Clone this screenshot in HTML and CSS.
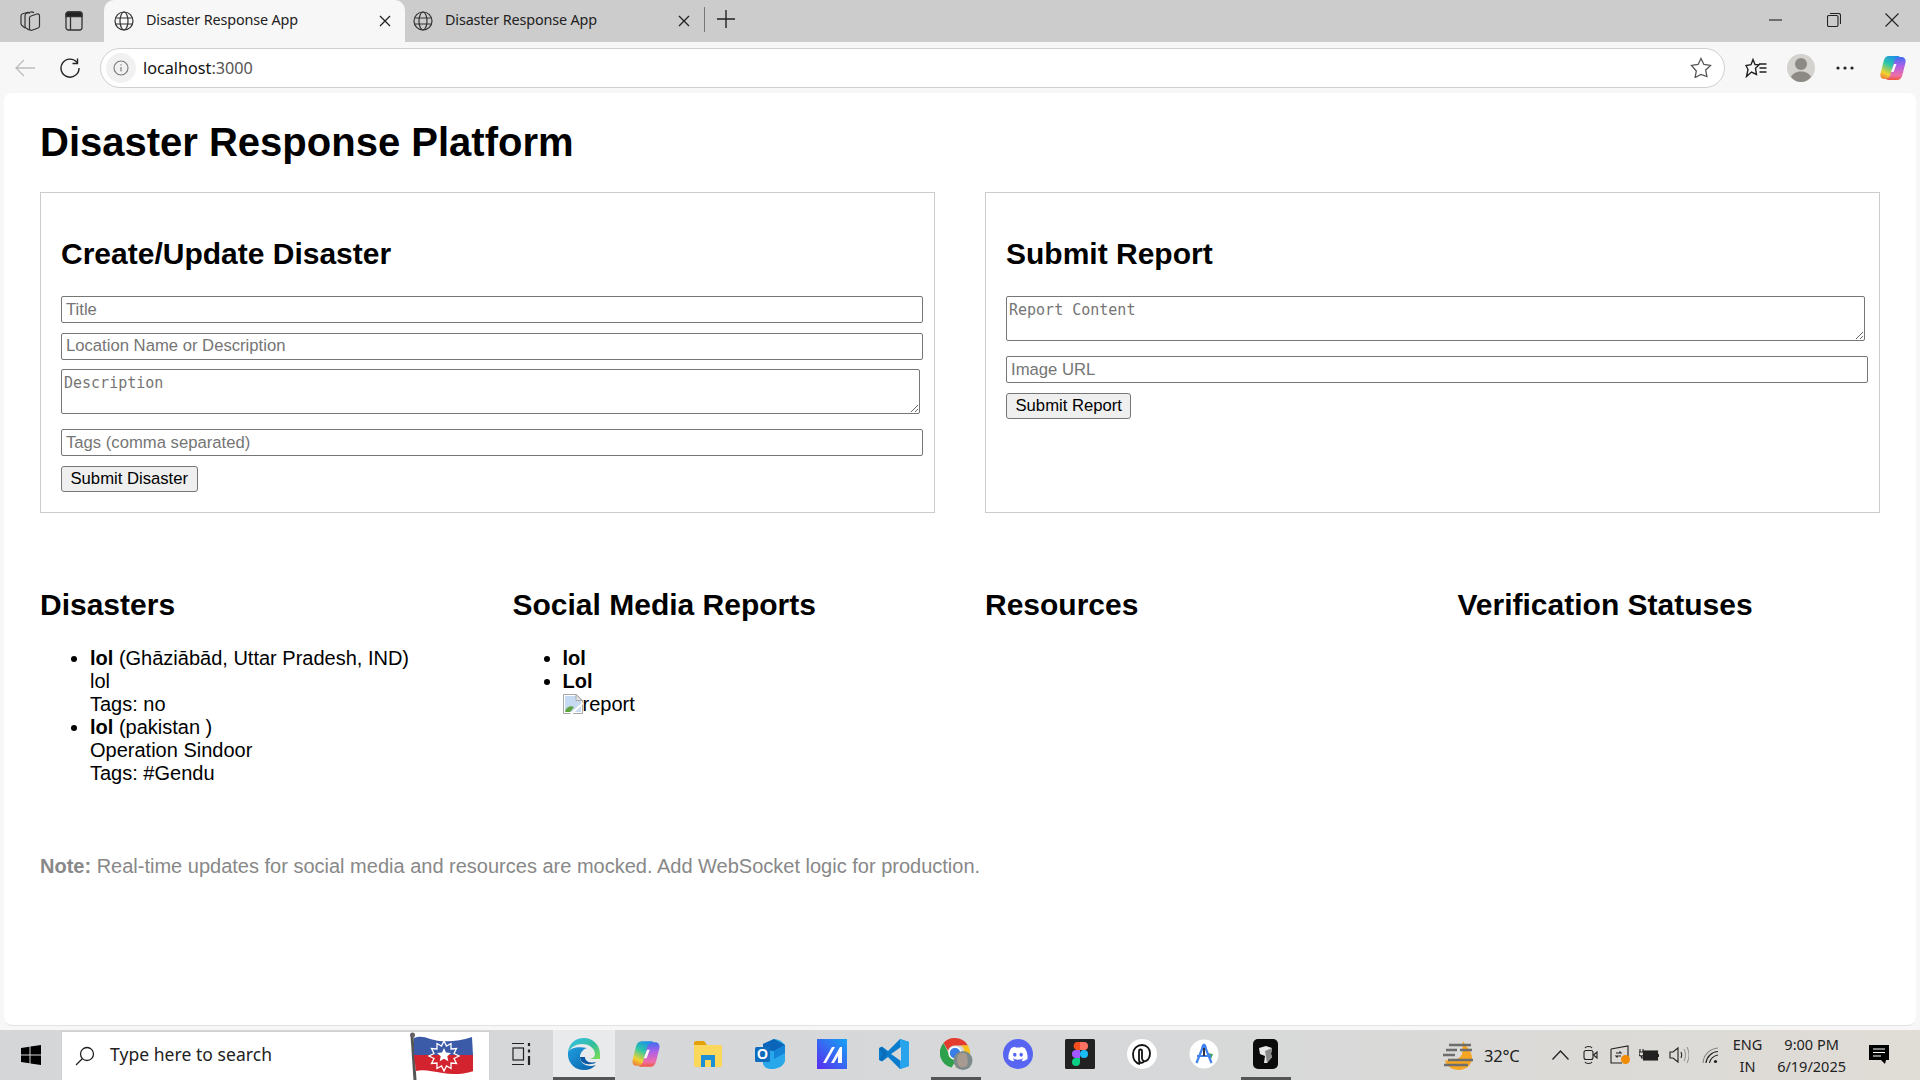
FILE: index.html
```html
<!DOCTYPE html>
<html lang="en">
<head>
    <meta charset="UTF-8">
    <meta name="viewport" content="width=device-width, initial-scale=1.0">
    <title>Disaster Response App</title>
    <link rel="stylesheet" href="styles.css">
</head>
<body>
    <svg class="defs" width="0" height="0">
        <defs>
            <linearGradient id="copilotA" x1="0.7" y1="0" x2="0.3" y2="1">
                <stop offset="0" stop-color="#1f8fe8"/><stop offset="0.4" stop-color="#2cc7a8"/><stop offset="0.8" stop-color="#f1d22e"/><stop offset="1" stop-color="#f08a3a"/>
            </linearGradient>
            <linearGradient id="copilotB" x1="0.5" y1="1" x2="0.5" y2="0">
                <stop offset="0" stop-color="#3f6ff0"/><stop offset="0.4" stop-color="#b05fe6"/><stop offset="0.8" stop-color="#ee6ea8"/><stop offset="1" stop-color="#f0563c"/>
            </linearGradient>
            <linearGradient id="edgeA" x1="0" y1="0" x2="1" y2="1">
                <stop offset="0" stop-color="#35c1f1"/><stop offset="0.55" stop-color="#33bd9c"/><stop offset="1" stop-color="#7ee04f"/>
            </linearGradient>
            <linearGradient id="edgeB" x1="0" y1="0" x2="1" y2="1">
                <stop offset="0" stop-color="#1f9fe0"/><stop offset="1" stop-color="#0a5fa8"/>
            </linearGradient>
            <linearGradient id="slashLogo" x1="1" y1="0" x2="0" y2="1">
                <stop offset="0" stop-color="#14a4f5"/><stop offset="1" stop-color="#5a2cf0"/>
            </linearGradient>
            <symbol id="copilot" viewBox="0 0 28 28">
                <path d="M10 2h9c.8 0 1.500.5 2 1.200-2.500.2-3.800 2-4.500 4.300L13 20c-.8 3-2.500 5-5.500 5h-2c-3 0-4.700-2.500-4-5.500l3-12C5.300 4 7 2 10 2z" fill="url(#copilotA)"/>
                <path d="M10 2h9c.8 0 1.500.5 2 1.200-2.500.2-3.800 2-4.500 4.300L13 20c-.8 3-2.500 5-5.500 5h-2c-3 0-4.700-2.500-4-5.500l3-12C5.300 4 7 2 10 2z" fill="url(#copilotB)" transform="rotate(180 14 14)"/>
                <path d="M15 10h2.500l-3 8H12z" fill="#fff"/>
            </symbol>
            <symbol id="globe" viewBox="0 0 20 20">
                <g fill="none" stroke="#333" stroke-width="1.200">
                    <circle cx="10" cy="10" r="9"/>
                    <ellipse cx="10" cy="10" rx="4" ry="9"/>
                    <path d="M1.500 7h17M1.500 13h17"/>
                </g>
            </symbol>
        </defs>
    </svg>

    <header class="tabStrip">
        <div class="stripIcons">
            <svg class="stripIcon" viewBox="0 0 22 22" width="22" height="22" fill="none" stroke="#333" stroke-width="1.200">
                <path d="M6 18 3 15.500c-.6-.5-1-1.200-1-2V6c0-1.200.7-2 1.700-2.300L8 2.500c1-.2 2 0 3 .8"/>
                <path d="M10.500 20.300 7 18c-.6-.5-1-1.200-1-2V5.500c0-1.200.8-2 1.800-2.300L12 2c1-.2 2 0 3 .8"/>
                <path d="M10.500 8c0-1 .6-1.700 1.500-2l6-2c1.300-.4 2.500.4 2.500 1.700V16c0 1-.6 1.700-1.500 2l-6 2.300c-1.300.4-2.500-.4-2.500-1.700z"/>
            </svg>
            <svg class="stripIcon" viewBox="0 0 18 20" width="18" height="20" fill="none" stroke="#333" stroke-width="1.300">
                <rect x="1" y="1" width="16" height="18" rx="2.500"/>
                <path d="M1 5.500V3.500C1 2 2 1 3.500 1h11C16 1 17 2 17 3.500v2z" fill="#222"/>
                <path d="M5.500 5.500V19"/>
            </svg>
        </div>
        <div class="tab tabActive">
            <svg class="tabGlobe" width="20" height="20"><use href="#globe"/></svg>
            <span class="tabTitle">Disaster Response App</span>
            <svg class="tabClose" viewBox="0 0 12 12" width="12" height="12" stroke="#222" stroke-width="1.300"><path d="M1 1l10 10M11 1 1 11"/></svg>
        </div>
        <div class="tab">
            <svg class="tabGlobe" width="20" height="20"><use href="#globe"/></svg>
            <span class="tabTitle">Disaster Response App</span>
            <svg class="tabClose" viewBox="0 0 12 12" width="12" height="12" stroke="#222" stroke-width="1.300"><path d="M1 1l10 10M11 1 1 11"/></svg>
        </div>
        <div class="tabSeparator"></div>
        <svg class="newTab" viewBox="0 0 18 18" width="18" height="18" stroke="#222" stroke-width="1.400"><path d="M9 0v18M0 9h18"/></svg>
        <div class="windowControls">
            <svg viewBox="0 0 14 14" width="14" height="14" stroke="#222" stroke-width="1.100"><path d="M0 7h13"/></svg>
            <svg viewBox="0 0 14 14" width="14" height="14" fill="none" stroke="#222" stroke-width="1.100"><rect x="0.500" y="2.500" width="10.500" height="11" rx="1.500"/><path d="M3 .5h8.500c1 0 2 1 2 2V11"/></svg>
            <svg viewBox="0 0 14 14" width="14" height="14" stroke="#222" stroke-width="1.100"><path d="M.5.5l13 13M13.500.5l-13 13"/></svg>
        </div>
    </header>

    <nav class="toolbar">
        <svg class="navBack" viewBox="0 0 20 18" width="20" height="18" fill="none" stroke="#bdbdbd" stroke-width="1.300"><path d="M20 9H1M9 1 1 9l8 8"/></svg>
        <svg class="navReload" viewBox="0 0 20 20" width="20" height="20" fill="none" stroke="#222" stroke-width="1.400"><path d="M17 4.500A9 9 0 1 0 19 10"/><path d="M17.500 .5v5h-5"/></svg>
        <div class="addressBar">
            <span class="siteInfo">
                <svg viewBox="0 0 16 16" width="16" height="16" fill="none" stroke="#777" stroke-width="1.100"><circle cx="8" cy="8" r="7"/><path d="M8 7v4.500M8 4.200v1.300"/></svg>
            </span>
            <span class="addressText">localhost<span class="addressPort">:3000</span></span>
            <svg class="addressStar" viewBox="0 0 22 21" width="22" height="21" fill="none" stroke="#555" stroke-width="1.300"><path d="M11 1.500l2.900 6 6.600.9-4.800 4.600 1.200 6.500L11 17.400l-5.900 3.100 1.200-6.500L1.500 8.400l6.600-.9z"/></svg>
        </div>
        <div class="toolbarRight">
            <svg viewBox="0 0 22 20" width="22" height="20" fill="none" stroke="#222" stroke-width="1.400"><path d="M8 1.500l2 5 4 .4-3.500 3.300 1 6.300L6.500 14l-5 4.500 1.500-7L1 7.500l5-.8z"/><path d="M14 6h7.500M14.500 10h7M14.500 14h7"/></svg>
            <svg class="avatar" viewBox="0 0 28 28" width="28" height="28"><circle cx="14" cy="14" r="14" fill="#d4d2ce"/><circle cx="14" cy="10" r="6" fill="#8d8985"/><path d="M4 23c2-4 6-5.500 10-5.500s8 1.500 10 5.500c-2.500 3-6 5-10 5s-7.500-2-10-5z" fill="#8d8985"/></svg>
            <svg class="moreDots" viewBox="0 0 18 4" width="18" height="4" fill="#222"><circle cx="2" cy="2" r="1.600"/><circle cx="9" cy="2" r="1.600"/><circle cx="16" cy="2" r="1.600"/></svg>
            <svg class="copilotButton" width="28" height="28"><use href="#copilot"/></svg>
        </div>
    </nav>

    <main class="page">
        <h1>Disaster Response Platform</h1>

        <section class="forms">
            <div class="panel">
                <h2>Create/Update Disaster</h2>
                <input class="field" type="text" placeholder="Title">
                <input class="field" type="text" placeholder="Location Name or Description">
                <textarea class="area" placeholder="Description"></textarea>
                <input class="field" type="text" placeholder="Tags (comma separated)">
                <button class="submit">Submit Disaster</button>
            </div>
            <div class="panel">
                <h2>Submit Report</h2>
                <textarea class="area" placeholder="Report Content"></textarea>
                <input class="field" type="text" placeholder="Image URL">
                <button class="submit">Submit Report</button>
            </div>
        </section>

        <section class="lists">
            <div>
                <h2>Disasters</h2>
                <ul>
                    <li><strong>lol</strong> (Ghāziābād, Uttar Pradesh, IND)<br>lol<br>Tags: no</li>
                    <li><strong>lol</strong> (pakistan )<br>Operation Sindoor<br>Tags: #Gendu</li>
                </ul>
            </div>
            <div>
                <h2>Social Media Reports</h2>
                <ul>
                    <li><strong>lol</strong></li>
                    <li><strong>Lol</strong><br>
                        <span class="brokenImage">
                            <svg viewBox="0 0 20 20" width="20" height="20">
                                <path d="M.5.5h13l6 6v13H.5z" fill="#fff" stroke="#a8a8a8"/>
                                <path d="M2 2h11l5 5v11H2z" fill="#c6daf2"/>
                                <path d="M2 18c1-5 5-7 9-5l-4 5z" fill="#5fa33c"/>
                                <path d="M13 .5v6h6z" fill="#e8e8e8" stroke="#a8a8a8"/>
                                <path d="M8 20 20 9" stroke="#fff" stroke-width="2"/>
                            </svg>report
                        </span>
                    </li>
                </ul>
            </div>
            <div>
                <h2>Resources</h2>
            </div>
            <div>
                <h2>Verification Statuses</h2>
            </div>
        </section>

        <p class="note"><strong>Note:</strong> Real-time updates for social media and resources are mocked. Add WebSocket logic for production.</p>
    </main>

    <footer class="taskbar">
        <div class="startButton">
            <svg viewBox="0 0 20 20" width="20" height="20" fill="#000"><path d="M0 3l8.500-1.300v7.700H0zM9.500 1.500 20 0v9.400H9.500zM0 10.500h8.500v7.800L0 17zM9.500 10.500H20V20L9.500 18.500z"/></svg>
        </div>
        <div class="searchBox">
            <svg viewBox="0 0 20 20" width="20" height="20" fill="none" stroke="#222" stroke-width="1.300"><circle cx="12" cy="8" r="6.500"/><path d="M7.500 12.500 1 19"/></svg>
            <span class="searchText">Type here to search</span>
            <svg class="searchFlag" viewBox="0 0 63 48" width="63" height="48">
                <path d="M2 3l3 45" stroke="#555" stroke-width="3"/>
                <circle cx="2.500" cy="3" r="2.500" fill="#665f66"/>
                <path d="M4 6c9-4 16 2 26 3s20 0 32-4l1 18H4z" fill="#3b5ba8"/>
                <path d="M4 23h59l.500 16c-10 3-20 4-31 2S13 37 6 39z" fill="#d3232f"/>
                <path d="M34 9l2.500 5 4.500-2.500 0 5.500 5.500-.5-2.500 5 5 2.500-5 2.500 2.500 5-5.500-.5 0 5.500-4.500-2.500-2.500 5-2.500-5-4.500 2.500 0-5.500-5.500.5 2.500-5-5-2.500 5-2.500-2.500-5 5.500.5 0-5.500 4.500 2.500z" fill="none" stroke="#fff" stroke-width="1.300"/>
                <path d="M34 16l2 4.500 5 .5-3.700 3.300 1 5-4.300-2.600-4.300 2.600 1-5L27 21l5-.5z" fill="#fff"/>
            </svg>
        </div>
        <div class="appSlot appTaskView">
            <svg viewBox="0 0 20 24" width="20" height="24" fill="none" stroke="#222" stroke-width="1.200"><path d="M0 1.500h12M0 22.500h12"/><rect x="1" y="6" width="10.500" height="12"/><path d="M17 1v3M17 7.500v3M17 14v9" stroke-width="2.200"/></svg>
        </div>
        <div class="appSlot appActive">
            <svg viewBox="0 0 32 32" width="32" height="32">
                <path d="M16 0C7 0 1 6 0 14c3-5 8-8 14-8 8 0 13 5 13 10 0 3-3 5-7 5h12c.500-2 0-4 0-5C32 7 25 0 16 0z" fill="url(#edgeA)"/>
                <path d="M0 14c-1 10 6 18 16 18 5 0 9-2 12-5-8 3-16-1-16-8 0-4 3-8 7-9-9-2-17 0-19 4z" fill="url(#edgeB)"/>
                <path d="M12 19c0 5 5 8 11 7 3 0 4-1 5-2-3 1-11 1-11-5z" fill="#0c59a4"/>
            </svg>
        </div>
        <div class="appSlot"><svg width="30" height="30"><use href="#copilot"/></svg></div>
        <div class="appSlot">
            <svg viewBox="0 0 28 28" width="28" height="28">
                <path d="M0 3c0-1 .8-2 2-2h8l3 4H0z" fill="#e3a008"/>
                <rect x="0" y="5" width="28" height="22" rx="1" fill="#fbd75b"/>
                <path d="M7 15h14v12h-4v-7h-6v7H7z" fill="#1d8fd6"/>
            </svg>
        </div>
        <div class="appSlot">
            <svg viewBox="0 0 30 30" width="30" height="30">
                <path d="M8 5 19 0c4 0 8 2 11 6v16c-2 6-8 8-13 8-5 0-8-2-9-5z" fill="#28a8ea"/>
                <path d="M8 5 19 0l11 6-11 6-11-1z" fill="#0a64b8"/>
                <path d="M19 12l11-6v8l-11 6z" fill="#1384d8"/>
                <rect x="0" y="8" width="15" height="15" rx="1.500" fill="#0f6cbd"/>
                <text class="outlookLetter" x="7.500" y="20" text-anchor="middle">O</text>
            </svg>
        </div>
        <div class="appSlot">
            <svg viewBox="0 0 30 30" width="30" height="30">
                <rect width="30" height="30" fill="url(#slashLogo)"/>
                <path d="M6 24l9-16h3L9 24zM14 24l9-16h2v16h-4v-7l-4 7z" fill="#fff"/>
            </svg>
        </div>
        <div class="appSlot">
            <svg viewBox="0 0 30 30" width="30" height="30">
                <path d="M21 0 9 12 3 7.500 0 9v12l3 1.500L9 18l12 12 9-3V3z" fill="#0a7ccd"/>
                <path d="M21 0l9 3v24l-9 3z" fill="#27a4ec"/>
                <path d="M22 8 12 15l10 7z" fill="#d5d7d9"/>
                <path d="M0 9.500 3 8l5 7-5 7-3-1.500L4 15z" fill="#0a6db8"/>
            </svg>
        </div>
        <div class="appSlot appOpen">
            <svg viewBox="0 0 33 32" width="33" height="32">
                <path d="M15 0a15 15 0 0 1 13 7.500H15a7.500 7.500 0 0 0-7 5L3.500 5A15 15 0 0 1 15 0z" fill="#e33b2e"/>
                <path d="M3.500 5 10 18a7.500 7.500 0 0 0 6 4.500L11.500 29.500A15 15 0 0 1 3.500 5z" fill="#2fa04b"/>
                <path d="M28 7.500A15 15 0 0 1 15 30l7-11a7.500 7.500 0 0 0-1-11.500z" fill="#f9c21a"/>
                <circle cx="15" cy="15" r="6" fill="#3a7ee8" stroke="#fff" stroke-width="1.500"/>
                <circle cx="23" cy="22.500" r="9.500" fill="#7d8a8c"/>
                <path d="M18 17c3-3 8-3 9 1 1 3 1 7 0 10-3 2-7 2-9-1-1-3-1-7 0-10z" fill="#a79a90"/>
            </svg>
        </div>
        <div class="appSlot">
            <svg viewBox="0 0 30 30" width="30" height="30">
                <circle cx="15" cy="15" r="15" fill="#5865f2"/>
                <g transform="translate(5.400 5.400) scale(0.8)"><path fill="#fff" d="M20.317 4.3698a19.7913 19.7913 0 00-4.8851-1.5152.0741.0741 0 00-.0785.0371c-.211.3753-.4447.8648-.6083 1.2495-1.8447-.2762-3.68-.2762-5.4868 0-.1636-.3933-.4058-.8742-.6177-1.2495a.077.077 0 00-.0785-.037 19.7363 19.7363 0 00-4.8852 1.515.0699.0699 0 00-.0321.0277C.5334 9.0458-.319 13.5799.0992 18.0578a.0824.0824 0 00.0312.0561c2.0528 1.5076 4.0413 2.4228 5.9929 3.0294a.0777.0777 0 00.0842-.0276c.4616-.6304.8731-1.2952 1.226-1.9942a.076.076 0 00-.0416-.1057c-.6528-.2476-1.2743-.5495-1.8722-.8923a.077.077 0 01-.0076-.1277c.1258-.0943.2517-.1923.3718-.2914a.0743.0743 0 01.0776-.0105c3.9278 1.7933 8.18 1.7933 12.0614 0a.0739.0739 0 01.0785.0095c.1202.099.246.1981.3728.2924a.077.077 0 01-.0066.1276 12.2986 12.2986 0 01-1.873.8914.0766.0766 0 00-.0407.1067c.3604.698.7719 1.3628 1.225 1.9932a.076.076 0 00.0842.0286c1.961-.6067 3.9495-1.5219 6.0023-3.0294a.077.077 0 00.0313-.0552c.5004-5.177-.8382-9.6739-3.5485-13.6604a.061.061 0 00-.0312-.0286zM8.02 15.3312c-1.1825 0-2.1569-1.0857-2.1569-2.419 0-1.3332.9555-2.4189 2.157-2.4189 1.2108 0 2.1757 1.0952 2.1568 2.419 0 1.3332-.9555 2.4189-2.1569 2.4189zm7.9748 0c-1.1825 0-2.1569-1.0857-2.1569-2.419 0-1.3332.9554-2.4189 2.1569-2.4189 1.2108 0 2.1757 1.0952 2.1568 2.419 0 1.3332-.946 2.4189-2.1568 2.4189Z"/></g>
            </svg>
        </div>
        <div class="appSlot">
            <svg viewBox="0 0 30 30" width="30" height="30">
                <rect width="30" height="30" rx="1.500" fill="#222"/>
                <path d="M15 3h-4a4.500 4.500 0 0 0 0 8h4z" fill="#f24e1e"/>
                <path d="M15 3h4a4 4 0 0 1 0 8h-4z" fill="#ff7262"/>
                <path d="M15 11h-4a4 4 0 0 0 0 8h4z" fill="#a259ff"/>
                <circle cx="19" cy="15" r="4" fill="#1abcfe"/>
                <path d="M11 19h4v4a4 4 0 1 1-4-4z" fill="#0acf83"/>
            </svg>
        </div>
        <div class="appSlot">
            <svg viewBox="0 0 30 30" width="30" height="30">
                <circle cx="15" cy="15" r="15" fill="#fff"/>
                <path d="M13 25c-5-1-7-5-7-10 0-5 4-9 9-9s8 4 8 8c0 4-2 7-4 8-2 .8-4-.5-4-3v-7c0-2-3-2-3 0v9c0 3 4 4 5 1" fill="none" stroke="#111" stroke-width="1.800"/>
            </svg>
        </div>
        <div class="appSlot">
            <svg viewBox="0 0 30 30" width="30" height="30">
                <circle cx="15" cy="15" r="14.500" fill="#fff"/>
                <path d="M18 14l6 1-2 5z" fill="#3ca55c"/>
                <path d="M15 5 7.500 24M15 5l7.500 19M8 17h14" fill="none" stroke="#3f82ee" stroke-width="2.200"/>
                <circle cx="15" cy="8" r="2.500" fill="#3f82ee"/>
                <rect x="14" y="9" width="2" height="8" fill="#334"/>
            </svg>
        </div>
        <div class="appSlot appOpen">
            <svg viewBox="0 0 26 30" width="26" height="30">
                <rect width="25" height="30" rx="5" fill="#0b0b0b"/>
                <path d="M6 9l7-2 6 2-1 6 1 3-5 6-3 0 1-7-5-2z" fill="#e8e8e8"/>
                <path d="M12 12l7-3-1 6 1 3-5 6z" fill="#8b8b8b"/>
            </svg>
        </div>
        <div class="tray">
            <div class="weather">
                <svg viewBox="0 0 30 30" width="30" height="30">
                    <path d="M20 1c2 5 9 9 9 17 0 7-6 12-13 12-7 0-13-4-14-10 6 2 15 0 17-6 1-4 0-9 1-13z" fill="#f5a623"/>
                    <path d="M6 5h22M3 10h11M17 10h12M0 15h12M5 20h25M1 25h24" stroke="#6e6e6e" stroke-width="2.400" fill="none"/>
                </svg>
                <span class="trayText">32°C</span>
            </div>
            <svg class="trayChevron" viewBox="0 0 17 10" width="17" height="10" fill="none" stroke="#222" stroke-width="1.300"><path d="M.5 9.500l8-8.500 8 8.500"/></svg>
            <svg class="trayCamera" viewBox="0 0 15 20" width="15" height="20" fill="none" stroke="#222" stroke-width="1.100"><path d="M2 3C3 1 8 1 9 3M2 17c1 2 6 2 7 0"/><rect x="1" y="5.500" width="9" height="9" rx="2"/><path d="M10.500 10l3.500-3v6z"/></svg>
            <svg class="trayUpdate" viewBox="0 0 21 20" width="21" height="20" fill="none" stroke="#222" stroke-width="1.100"><path d="M1 4l17-3v11M1 4v14h11"/><path d="M6 8h5l-1.500-1.500M11 11H6l1.500 1.500"/><circle cx="15.500" cy="14.500" r="4.500" fill="#f28a02" stroke="none"/></svg>
            <svg class="trayBattery" viewBox="0 0 20 14" width="20" height="14" fill="none" stroke="#222" stroke-width="1.100"><path d="M1 1v3M4 1v3M0 4h5v2c0 1-1 2-2.500 2S0 7 0 6zM2.500 8v2h2"/><rect x="4.500" y="3" width="14" height="9" fill="#222"/><path d="M19.500 6v3"/></svg>
            <svg class="traySound" viewBox="0 0 20 20" width="20" height="20" fill="none" stroke="#222" stroke-width="1.100"><path d="M1 7h3l5-4v14l-5-4H1z"/><path d="M12 7c1 2 1 4 0 6"/><path d="M15 4c2 4 2 8 0 12M18 2c2.500 5 2.500 11 0 16" stroke="#999"/></svg>
            <svg class="trayWifi" viewBox="0 0 17 17" width="17" height="17" fill="none" stroke="#222" stroke-width="1.100"><path d="M1 16C1.500 8 8 1.500 16 1" stroke="#888"/><path d="M4 16C4.500 10 10 4.500 16 4.500"/><path d="M7.500 16C8 12 12 8.500 16 8"/><circle cx="13.500" cy="14.500" r="1.600" fill="#222" stroke="none"/></svg>
            <div class="trayStack trayLang"><span>ENG</span><span>IN</span></div>
            <div class="trayStack trayClock"><span>9:00 PM</span><span>6/19/2025</span></div>
            <svg class="trayNotify" viewBox="0 0 21 20" width="21" height="20"><path d="M0 0h20v15h-3l-1 4-4-4H0z" fill="#000"/><path d="M4 4h12M4 7.500h12M4 11h8" stroke="#fff" stroke-width="1.100"/></svg>
        </div>
    </footer>
</body>
</html>
```

FILE: styles.css
```css
* {
    box-sizing: border-box;
}

html, body {
    height: 100%;
}

body {
    margin: 0;
    display: flex;
    flex-direction: column;
    overflow: hidden;
    background-color: #f7f7f7;
    font-family: "Liberation Sans", Arial, sans-serif;
    color: #000;
}

.defs {
    position: absolute;
    width: 0;
    height: 0;
}

/* browser tabs */
.tabStrip {
    flex: 0 0 42px;
    display: flex;
    align-items: center;
    background-color: #cccccc;
    font-family: "Noto Sans", sans-serif;
}

.stripIcons {
    width: 104px;
    display: flex;
    align-items: center;
    gap: 24px;
    padding-left: 19px;
}

.tab {
    width: 301px;
    height: 42px;
    display: flex;
    align-items: center;
    padding: 0 14px 0 10px;
    font-size: 14.4px;
    color: #222;
}

.tabActive {
    background-color: #f7f7f7;
    border-radius: 10px 10px 0 0;
}

.tab + .tab {
    width: 299px;
    padding-left: 8px;
    padding-right: 14px;
}

.tabGlobe {
    flex: none;
}

.tabTitle {
    flex: 1;
    margin-left: 12px;
    margin-top: -3px;
    letter-spacing: -0.15px;
}

.tabSeparator {
    width: 1px;
    height: 25px;
    margin-top: -4px;
    background-color: #777;
}

.newTab {
    margin-left: 12px;
    margin-top: -4px;
}

.windowControls {
    margin-left: auto;
    margin-top: -2px;
    width: 150px;
    display: flex;
    gap: 44px;
    margin-right: 1px;
}

/* address bar row */
.toolbar {
    flex: 0 0 51px;
    display: flex;
    align-items: center;
    background-color: #f7f7f7;
}

.navBack {
    margin-left: 15px;
}

.navReload {
    margin-left: 25px;
}

.addressBar {
    width: 1625px;
    height: 40px;
    margin-left: 20px;
    display: flex;
    align-items: center;
    background-color: #fff;
    border: 1px solid #cfcfcf;
    border-radius: 20px;
    padding: 0 12px 0 5px;
    font-family: "Noto Sans", sans-serif;
}

.siteInfo {
    width: 30px;
    height: 30px;
    border-radius: 50%;
    background-color: #f1f1f1;
    display: flex;
    align-items: center;
    justify-content: center;
}

.addressText {
    margin-left: 7px;
    font-size: 16.2px;
    color: #111;
}

.addressPort {
    color: #555;
}

.addressStar {
    margin-left: auto;
}

.toolbarRight {
    display: flex;
    align-items: center;
    padding-left: 20px;
}

.avatar {
    margin-left: 20px;
}

.moreDots {
    margin-left: 21px;
}

.copilotButton {
    margin-left: 25px;
}

/* page inside the browser */
.page {
    flex: 1;
    margin: 0 4px;
    padding: 0 36px;
    background-color: #fff;
    border-radius: 8px;
    border-bottom: 1px solid #e2e2e2;
    min-height: 0;
}

h1 {
    margin: 26px 0 27px;
    font-size: 40px;
    line-height: 46px;
}

h2 {
    margin: 24px 0 25px;
    font-size: 30px;
    line-height: 34px;
}

.forms {
    display: grid;
    grid-template-columns: 1fr 1fr;
    gap: 50px;
    margin-bottom: 51px;
}

.panel {
    height: 321px;
    padding: 20px;
    border: 1px solid #ccc;
}

.field {
    display: block;
    box-sizing: content-box;
    width: calc(100% - 1px);
    height: 25px;
    margin-bottom: 9.5px;
    padding: 0 4px;
    border: 1px solid #767676;
    border-radius: 2px;
    font-family: "Liberation Sans", Arial, sans-serif;
    font-size: 16.67px;
}

.area {
    display: block;
    box-sizing: content-box;
    width: 100%;
    height: 37px;
    margin-bottom: 15px;
    padding: 4px 2px 2px;
    border: 1px solid #767676;
    border-radius: 2px;
    font-family: "DejaVu Sans Mono", monospace;
    font-size: 15px;
    line-height: 19.5px;
}

.field::placeholder, .area::placeholder {
    color: #757575;
}

.submit {
    display: block;
    height: 26px;
    padding: 0 8.5px;
    background-color: #efefef;
    border: 1px solid #767676;
    border-radius: 3px;
    font-family: "Liberation Sans", Arial, sans-serif;
    font-size: 16.67px;
    color: #000;
}

.lists {
    display: grid;
    grid-template-columns: repeat(4, 1fr);
    gap: 50px;
}

.lists ul {
    margin: 0;
    padding-left: 50px;
    font-size: 20px;
    line-height: 23px;
}

.brokenImage svg {
    vertical-align: -3px;
}

.note {
    margin: 70px 0 0;
    font-size: 20px;
    line-height: 23px;
    color: #888;
}

/* windows taskbar */
.taskbar {
    flex: 0 0 50px;
    margin-top: 4px;
    display: flex;
    align-items: stretch;
    background: linear-gradient(90deg, #d4d6d8 0%, #d6d8d9 60%, #e0dcd6 100%);
    font-family: "Noto Sans", sans-serif;
}

.startButton {
    width: 61px;
    display: flex;
    align-items: center;
    justify-content: center;
}

.searchBox {
    width: 429px;
    margin-top: 1px;
    display: flex;
    align-items: center;
    padding-left: 13px;
    background-color: #fff;
    border: 1px solid #d0d0d0;
    border-bottom: none;
    color: #222;
}

.searchText {
    margin-left: 15px;
    margin-top: -4px;
    font-size: 17.5px;
    letter-spacing: 0.05px;
}

.searchFlag {
    margin-left: auto;
    margin-right: 16px;
    align-self: flex-end;
}

.appSlot {
    width: 62px;
    flex: none;
    display: flex;
    align-items: center;
    justify-content: center;
    padding-bottom: 3px;
}

.appTaskView {
    width: 63px;
}

.appActive {
    background-color: #e8eaeb;
    border-bottom: 3px solid #555;
    padding-bottom: 0;
}

.appOpen {
    background: linear-gradient(#555, #555) center bottom / 50px 3px no-repeat;
}

.outlookLetter {
    font-family: "Liberation Sans", Arial, sans-serif;
    font-size: 14px;
    font-weight: bold;
    fill: #fff;
}

.tray {
    flex: 1;
    display: flex;
    align-items: center;
    padding-left: 146px;
    color: #222;
}

.weather {
    display: flex;
    align-items: center;
    gap: 11px;
}

.trayText {
    font-size: 16.5px;
    letter-spacing: -0.2px;
}

.trayChevron {
    margin-left: 32px;
}

.trayCamera {
    margin-left: 14px;
}

.trayUpdate {
    margin-left: 12px;
}

.trayBattery {
    margin-left: 8px;
}

.traySound {
    margin-left: 10px;
}

.trayWifi {
    margin-left: 13px;
}

.trayStack {
    display: flex;
    flex-direction: column;
    align-items: center;
    gap: 2px;
    font-size: 14.5px;
    line-height: 20px;
}

.trayLang {
    width: 30px;
    margin-left: 14px;
}

.trayClock {
    width: 70px;
    margin-left: 14px;
}

.trayNotify {
    margin-left: 22px;
}
```
